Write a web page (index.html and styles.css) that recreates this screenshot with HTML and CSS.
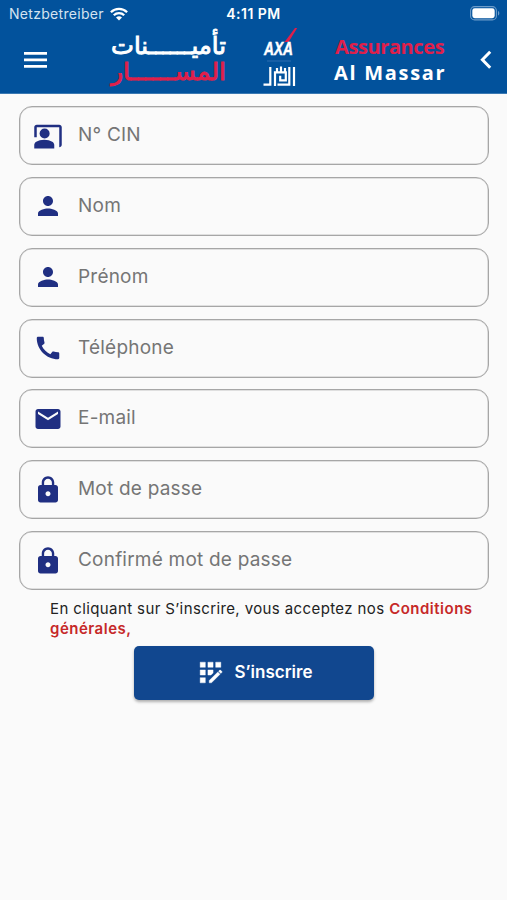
FILE: index.html
```html
<!DOCTYPE html>
<html lang="fr">
<head>
  <meta charset="UTF-8" />
  <meta name="viewport" content="width=device-width, initial-scale=1" />
  <title>Assurances Al Massar</title>
  <link rel="stylesheet" href="styles.css">
</head>
<body>
  <header class="header">
    <div class="status-bar">
      <div class="carrier">
        <span class="carrier-name">Netzbetreiber</span>
        <svg class="wifi" viewBox="0 0 18 14" fill="none" stroke="#fff" stroke-width="2.3">
          <path d="M.9 5.2a11.6 11.6 0 0 1 16.2 0" />
          <path d="M3.8 8.3a7.4 7.4 0 0 1 10.4 0" />
          <path d="M9 13.6L6 10.6a4.3 4.3 0 0 1 6 0z" fill="#fff" stroke="none" />
        </svg>
      </div>
      <span class="clock">4:11 PM</span>
      <svg class="battery" viewBox="0 0 30 15">
        <rect x=".6" y=".6" width="25.8" height="13.3" rx="4" fill="none" stroke="#6d9cc9" stroke-width="1.1" />
        <rect x="2.3" y="2.3" width="22.4" height="9.9" rx="2.4" fill="#fff" />
        <path d="M28 5v4.6c1.8-.7 1.8-3.9 0-4.6z" fill="#6d9cc9" />
      </svg>
    </div>

    <nav class="nav-bar">
      <svg class="menu" viewBox="0 0 23 16" fill="#fff">
        <path d="M0 0h23v2.7H0zM0 6.5h23v2.7H0zM0 13h23v2.7H0z" />
      </svg>
      <svg class="brand-ar" viewBox="0 0 136 66" direction="rtl" lang="ar">
        <text class="ar-white" x="125" y="27" textLength="115" lengthAdjust="spacingAndGlyphs">تأميــــــنات</text>
        <text class="ar-red" x="125" y="53" textLength="115" lengthAdjust="spacingAndGlyphs">المســــــار</text>
      </svg>
      <svg class="brand-axa" viewBox="0 0 44 66">
        <path d="M36 1h2.2L29.6 15h-4z" fill="#e01f4a" />
        <text class="axa" x="5" y="28" textLength="29" lengthAdjust="spacingAndGlyphs">AXA</text>
        <path d="M8 34h24" stroke="#2c6cb0" stroke-width="1" />
        <g fill="none" stroke="#fff" stroke-width="2.2">
          <path d="M4.5 57.6h6.8V40" />
          <path d="M16 59V45.4h10.8v8h-5.6v-4.6" />
          <path d="M18 41v4.4M22 39.5v5.9M26 41v4.4" />
          <path d="M18.5 57.6h11.8V40M35 40v19" />
        </g>
      </svg>
      <div class="brand-fr">
        <span class="brand-red">Assurances</span>
        <span class="brand-white">Al Massar</span>
      </div>
      <svg class="back" viewBox="0 0 12 20" fill="none" stroke="#fff" stroke-width="3">
        <path d="M10.2 1.8L2.4 9.8l7.8 8" />
      </svg>
    </nav>
  </header>

  <main class="form">
    <div class="field">
      <svg class="icon" viewBox="0 0 24 24">
        <path d="M21 3H3c-1.1 0-2 .9-2 2v8h2V5h18v16c1.1 0 2-.9 2-2V5c0-1.1-.9-2-2-2z" />
        <circle cx="9.3" cy="10" r="4" />
        <path d="M15.39 16.56C13.71 15.7 11.53 15 9 15s-4.71.7-6.39 1.56C1.61 17.07 1 18.1 1 19.22V22h16v-2.78c0-1.12-.61-2.15-1.61-2.66z" />
      </svg>
      <span class="label">N° CIN</span>
    </div>
    <div class="field">
      <svg class="icon" viewBox="0 0 24 24">
        <path d="M12 12c2.21 0 4-1.79 4-4s-1.79-4-4-4-4 1.79-4 4 1.79 4 4 4zm0 2c-2.67 0-8 1.34-8 4v2h16v-2c0-2.66-5.33-4-8-4z" />
      </svg>
      <span class="label">Nom</span>
    </div>
    <div class="field">
      <svg class="icon" viewBox="0 0 24 24">
        <path d="M12 12c2.21 0 4-1.79 4-4s-1.79-4-4-4-4 1.79-4 4 1.79 4 4 4zm0 2c-2.67 0-8 1.34-8 4v2h16v-2c0-2.66-5.33-4-8-4z" />
      </svg>
      <span class="label">Prénom</span>
    </div>
    <div class="field">
      <svg class="icon" viewBox="0 0 24 24">
        <path d="M20.01 15.38c-1.23 0-2.42-.2-3.53-.56-.35-.12-.74-.03-1.01.24l-1.57 1.97c-2.83-1.35-5.48-3.9-6.89-6.83l1.95-1.66c.27-.28.35-.67.24-1.02-.37-1.11-.56-2.3-.56-3.53 0-.54-.45-.99-.99-.99H4.19C3.65 3 3 3.24 3 3.99 3 13.28 10.73 21 20.01 21c.71 0 .99-.63.99-1.18v-3.45c0-.54-.45-.99-.99-.99z" />
      </svg>
      <span class="label">Téléphone</span>
    </div>
    <div class="field">
      <svg class="icon" viewBox="0 0 24 24">
        <path d="M20 4H4c-1.1 0-1.99.9-1.99 2L2 18c0 1.1.9 2 2 2h16c1.1 0 2-.9 2-2V6c0-1.1-.9-2-2-2zm0 4l-8 5-8-5V6l8 5 8-5v2z" />
      </svg>
      <span class="label">E-mail</span>
    </div>
    <div class="field">
      <svg class="icon" viewBox="0 0 24 24">
        <path d="M18 8h-1V6c0-2.76-2.24-5-5-5S7 3.24 7 6v2H6c-1.1 0-2 .9-2 2v10c0 1.1.9 2 2 2h12c1.1 0 2-.9 2-2V10c0-1.1-.9-2-2-2zm-6 9c-1.1 0-2-.9-2-2s.9-2 2-2 2 .9 2 2-.9 2-2 2zm3.1-9H8.9V6c0-1.71 1.39-3.1 3.1-3.1 1.71 0 3.1 1.39 3.1 3.1v2z" />
      </svg>
      <span class="label">Mot de passe</span>
    </div>
    <div class="field">
      <svg class="icon" viewBox="0 0 24 24">
        <path d="M18 8h-1V6c0-2.76-2.24-5-5-5S7 3.24 7 6v2H6c-1.1 0-2 .9-2 2v10c0 1.1.9 2 2 2h12c1.1 0 2-.9 2-2V10c0-1.1-.9-2-2-2zm-6 9c-1.1 0-2-.9-2-2s.9-2 2-2 2 .9 2 2-.9 2-2 2zm3.1-9H8.9V6c0-1.71 1.39-3.1 3.1-3.1 1.71 0 3.1 1.39 3.1 3.1v2z" />
      </svg>
      <span class="label">Confirmé mot de passe</span>
    </div>

    <p class="terms">En cliquant sur S’inscrire, vous acceptez nos <a class="terms-link">Conditions<br>générales,</a></p>

    <button class="submit">
      <svg class="submit-icon" viewBox="0 0 24 24" fill="#fff">
        <path d="M10 4h4v4h-4zM4 16h4v4H4zM4 10h4v4H4zM4 4h4v4H4zM14 12.42V10h-4v4h2.42zM20.88 11.29l-1.17-1.17c-.16-.16-.42-.16-.58 0l-.88.88L20 12.75l.88-.88c.16-.16.16-.42 0-.58zM11 18.25V20h1.75l6.67-6.67-1.75-1.75zM16 4h4v4h-4z" stroke="#fff" stroke-width=".3" />
      </svg>
      <span class="submit-text">S’inscrire</span>
    </button>
  </main>
</body>
</html>
```

FILE: styles.css
```css
* {
  box-sizing: border-box;
}

body {
  margin: 0;
  min-height: 100vh;
  background: #fafafa;
  font-family: Inter, Roboto, sans-serif;
}

/* Header */
.header {
  height: 94px;
  background: #02529c;
  border-bottom: 1px solid #3b79b2;
  color: white;
}

.status-bar {
  display: grid;
  grid-template-columns: 1fr auto 1fr;
  align-items: center;
  height: 27px;
  padding: 0 7px 0 9px;
}

.carrier {
  display: flex;
  align-items: center;
  gap: 6px;
}

.carrier-name {
  font-size: 14px;
  letter-spacing: 0.3px;
  color: #d5e3f0;
}

.wifi {
  width: 18px;
  height: 14px;
}

.clock {
  padding-right: 2px;
  font-size: 14px;
  font-weight: 600;
  letter-spacing: 0.5px;
}

.battery {
  width: 30px;
  height: 15px;
  justify-self: end;
}

.nav-bar {
  display: flex;
  align-items: center;
  height: 66px;
  padding: 0 15px 0 24px;
}

.menu {
  width: 23px;
  height: 16px;
}

.brand-ar {
  width: 136px;
  height: 66px;
  margin-left: 54px;
}

.ar-white,
.ar-red {
  font-family: "DejaVu Sans", sans-serif;
  font-size: 24px;
  fill: white;
  stroke: white;
  stroke-width: 0.9px;
}

.ar-red {
  fill: #e01f4a;
  stroke: #e01f4a;
}

.brand-axa {
  width: 44px;
  height: 66px;
  margin-left: 22px;
}

.axa {
  font-family: "Liberation Sans", sans-serif;
  font-size: 18px;
  font-weight: bold;
  font-style: italic;
  fill: white;
  stroke: white;
  stroke-width: 0.5px;
}

.brand-fr {
  display: flex;
  flex-direction: column;
  margin-left: 31px;
  font-family: "Open Sans", sans-serif;
  font-size: 20px;
  font-weight: 700;
  line-height: 26px;
  white-space: nowrap;
}

.brand-red {
  padding-left: 1px;
  letter-spacing: -0.4px;
  color: #e01f4a;
}

.brand-white {
  letter-spacing: 1.7px;
}

.back {
  width: 12px;
  height: 20px;
  margin-left: auto;
}

/* Sign up form */
.form {
  display: flex;
  flex-direction: column;
  gap: 11.85px;
  padding: 12px 18px 0 19px;
}

.field {
  display: flex;
  align-items: center;
  gap: 15px;
  height: 59px;
  padding: 0 13px;
  border: 1px solid #a6a6a6;
  border-radius: 13px;
  box-shadow: inset 0 0 0 0.5px #c4c4c4;
}

.icon {
  width: 30px;
  height: 30px;
  margin-left: 0.4px;
  margin-right: -0.4px;
  fill: #202f82;
}

.label {
  padding-bottom: 2px;
  font-size: 19px;
  letter-spacing: 0.21px;
  color: #757575;
}

.terms {
  margin: -3px 0 -5px 31px;
  font-size: 15px;
  line-height: 20px;
  letter-spacing: 0.39px;
  color: #222;
}

.terms-link {
  font-weight: 600;
  letter-spacing: 0.5px;
  color: #c62828;
}

.submit {
  display: flex;
  align-items: center;
  align-self: center;
  justify-content: center;
  gap: 9px;
  width: 240px;
  height: 54px;
  padding: 0 7px 1px 6px;
  border: none;
  border-radius: 5px;
  background: #11478f;
  color: white;
  box-shadow: 0 2px 3px rgba(0, 0, 0, 0.3);
  font-family: inherit;
}

.submit-icon {
  width: 31px;
  height: 31px;
}

.submit-text {
  font-size: 17px;
  font-weight: 600;
}
```
